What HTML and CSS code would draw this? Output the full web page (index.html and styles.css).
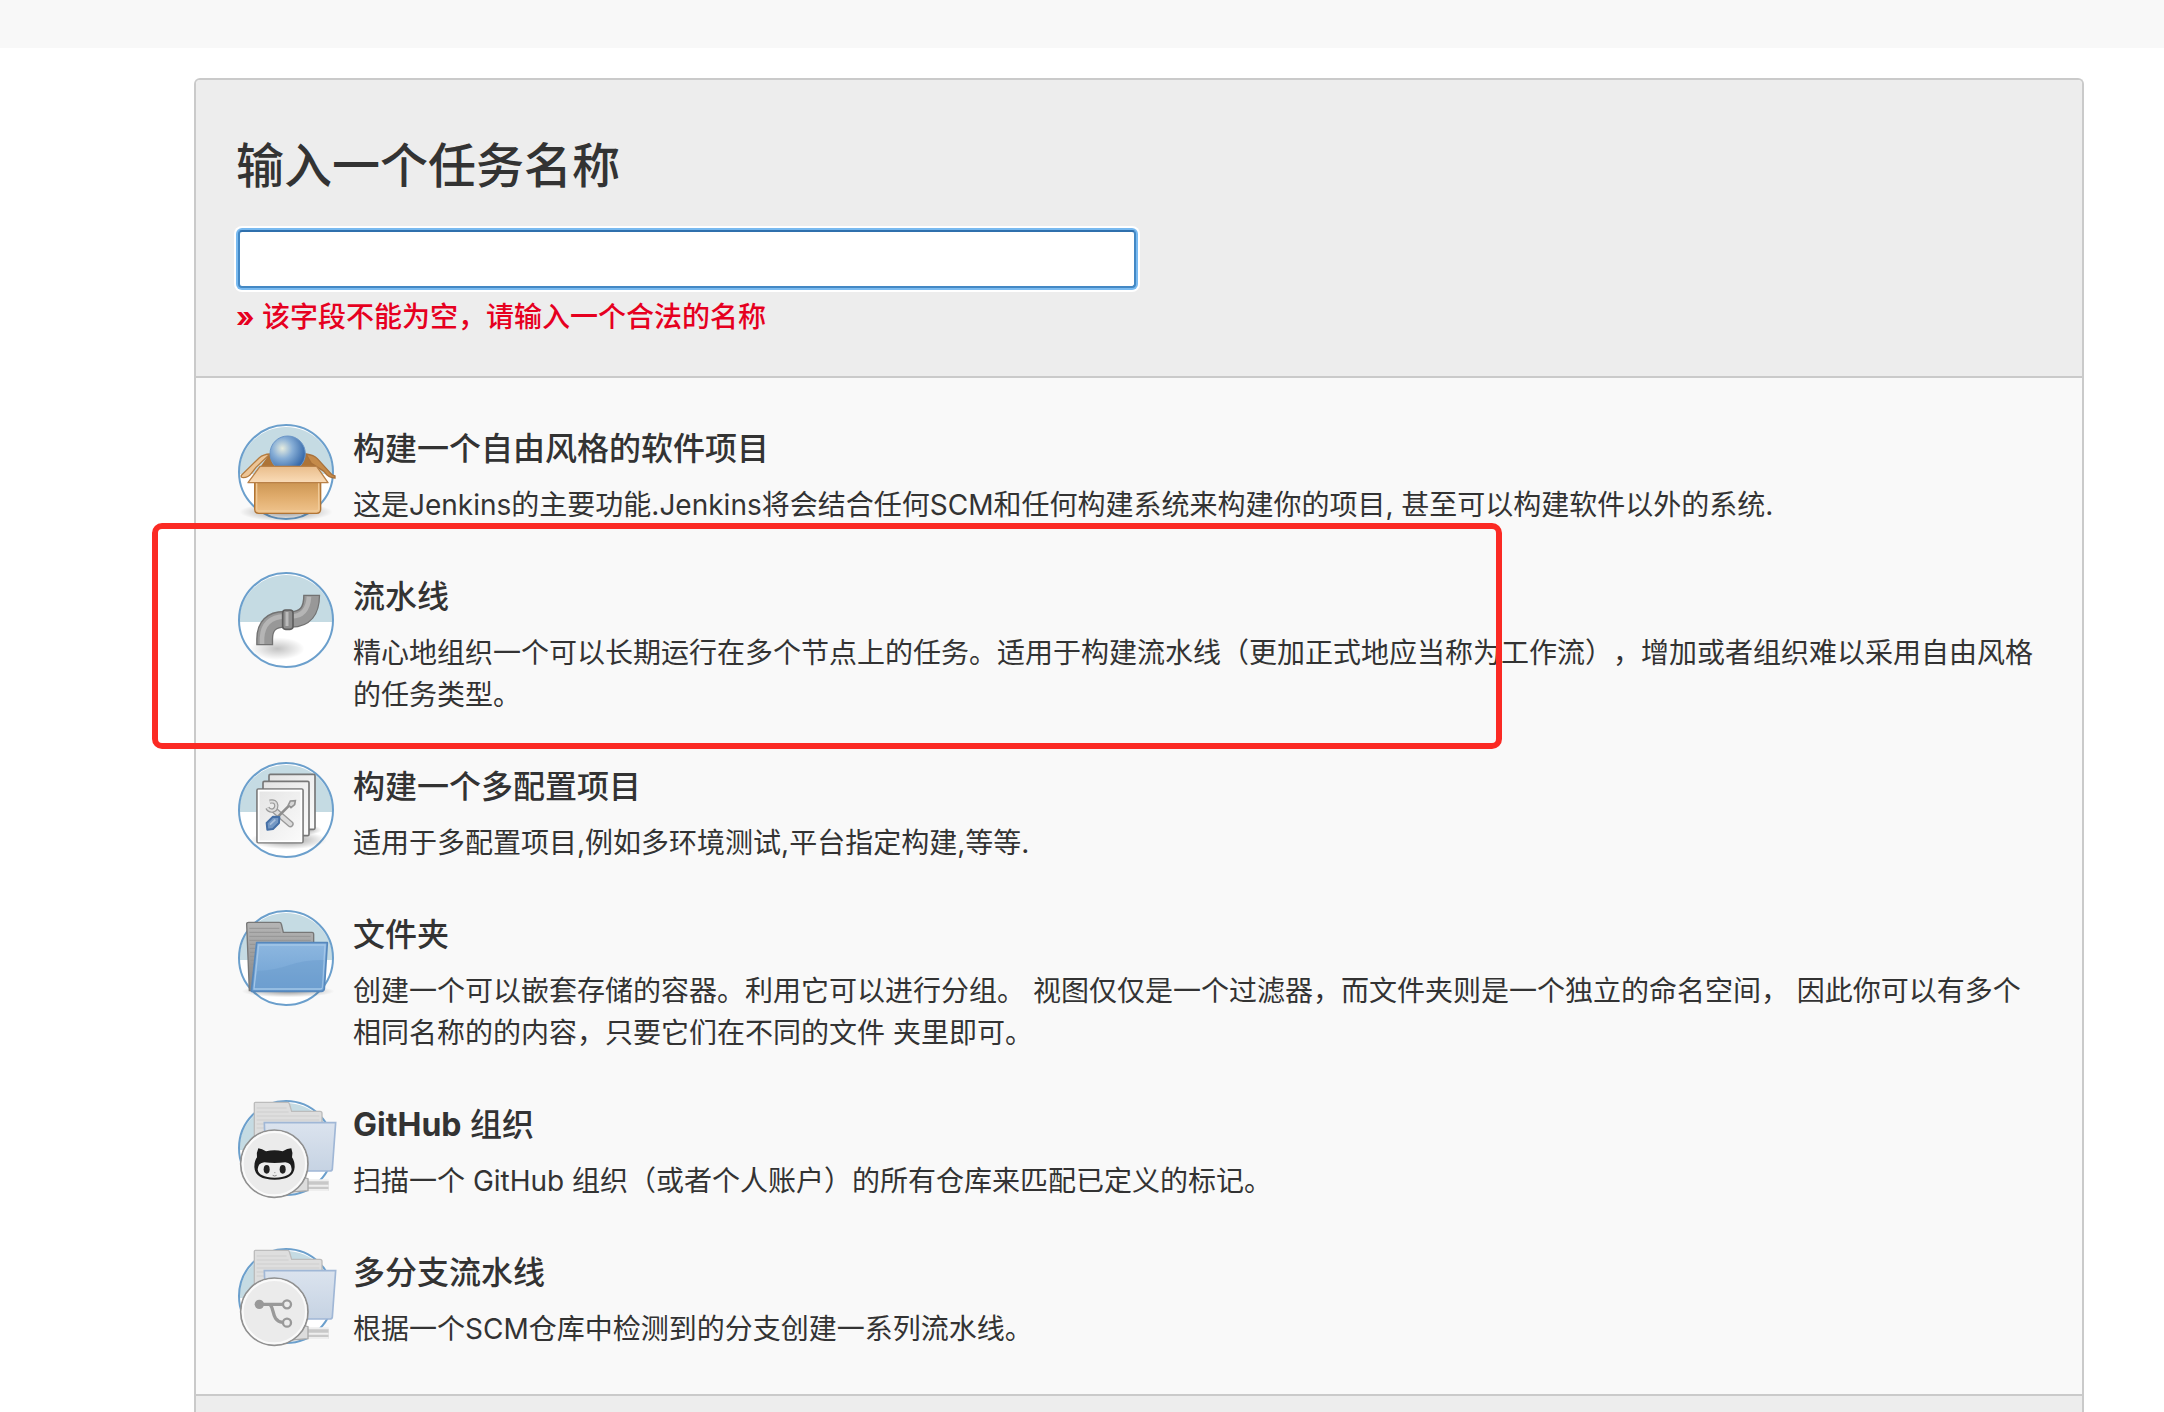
FILE: index.html
```html
<!DOCTYPE html>
<html lang="zh-Hans">
<head>
  <meta charset="UTF-8">
  <meta name="viewport" content="width=device-width, initial-scale=1.0">
  <title>新建任务 [Jenkins]</title>
  <link rel="stylesheet" href="styles.css">
</head>
<body>
  <svg class="defs" aria-hidden="true">
    <defs>
      <linearGradient id="boxFront" x1="0" y1="0" x2="0" y2="1">
        <stop offset="0" stop-color="#c9924f"/>
        <stop offset=".5" stop-color="#e0ac6c"/>
        <stop offset="1" stop-color="#f0c48e"/>
      </linearGradient>
      <linearGradient id="boxFlap" x1="0" y1="0" x2="0" y2="1">
        <stop offset="0" stop-color="#e9bd8b"/>
        <stop offset="1" stop-color="#fadcb8"/>
      </linearGradient>
      <radialGradient id="ball" cx=".35" cy=".35" r=".65">
        <stop offset="0" stop-color="#e6ecdf"/>
        <stop offset=".45" stop-color="#87aed6"/>
        <stop offset="1" stop-color="#3a6cab"/>
      </radialGradient>
      <linearGradient id="paper" x1="0" y1="0" x2="1" y2="1">
        <stop offset="0" stop-color="#e4e4e4"/>
        <stop offset="1" stop-color="#fbfbfb"/>
      </linearGradient>
      <linearGradient id="blueFolder" x1="0" y1="0" x2="0" y2="1">
        <stop offset="0" stop-color="#8db7e0"/>
        <stop offset="1" stop-color="#6d9fd1"/>
      </linearGradient>
      <linearGradient id="paleFolder" x1="0" y1="0" x2="0" y2="1">
        <stop offset="0" stop-color="#dbe3ee"/>
        <stop offset="1" stop-color="#c6d3e3"/>
      </linearGradient>
      <linearGradient id="greyFolder" x1="0" y1="0" x2="0" y2="1">
        <stop offset="0" stop-color="#b5b5b5"/>
        <stop offset="1" stop-color="#858585"/>
      </linearGradient>
      <radialGradient id="shadow">
        <stop offset="0" stop-color="#000" stop-opacity=".4"/>
        <stop offset="1" stop-color="#000" stop-opacity="0"/>
      </radialGradient>
      <g id="disc">
        <circle cx="150" cy="144" r="141" fill="#fff"/>
        <path d="M9 150A141 141 0 1 1 291 150Z" fill="#c5dbe3"/>
        <circle cx="150" cy="144" r="141" fill="none" stroke="#6b9fcc" stroke-width="6"/>
      </g>
      <g id="remote">
        <use href="#disc"/>
        <path d="M55 150V10q0-3 3-3H155q4 0 5 4L167 34H252q6 0 6 6V150Z" fill="#dedede" stroke="#bcbcbc" stroke-width="4"/>
        <path d="M62 24H152M62 36H158M62 48H250M62 60H250M62 72H250M62 84H250" stroke="#cecece" stroke-width="3"/>
        <path d="M85 68H299L289 207Q288 213 282 213H90Z" fill="url(#paleFolder)" stroke="#a0b7d6" stroke-width="5"/>
        <path d="M180 243H278V272H180Z" fill="#c8c8c8"/>
        <path d="M210 241H278M210 257H278M210 270H278" stroke="#eee" stroke-width="6"/>
        <path d="M195 230L216 236V272L170 276Z" fill="#ddd" stroke="#aaa" stroke-width="4"/>
        <circle cx="115" cy="191" r="101" fill="#ebebeb" stroke="#909090" stroke-width="5"/>
        <circle cx="115" cy="191" r="95" fill="none" stroke="#fafafa" stroke-width="6"/>
      </g>
    </defs>
  </svg>

  <div class="topbar"></div>

  <main class="panel">
    <div class="panel-header">
      <h1><label for="name">输入一个任务名称</label></h1>
      <input type="text" id="name" name="name" autocomplete="off" aria-describedby="nameError">
      <div class="error" id="nameError"><b>»</b> 该字段不能为空，请输入一个合法的名称</div>
    </div>

    <ul class="items">
      <li class="item">
        <svg class="icon" viewBox="0 0 300 288" aria-hidden="true">
          <use href="#disc"/>
          <ellipse cx="150" cy="264" rx="140" ry="28" fill="url(#shadow)"/>
          <g transform="translate(-48 -42)">
            <path d="M108 190L148 132H262L304 190Z" fill="#ad7437"/>
            <path d="M150 132Q130 133 118 143L64 196Q62 203 70 203Q85 202 94 190L108 172Z" fill="#edc596" stroke="#b47b3e" stroke-width="4"/>
            <path d="M258 132Q282 135 292 146L330 188Q335 196 345 198V204Q325 204 312 184L274 160Z" fill="#c58b4a" stroke="#a9713a" stroke-width="4"/>
            <circle cx="203" cy="131" r="53" fill="url(#ball)" stroke="#6b96c8" stroke-width="3"/>
            <path d="M104 210H302V298Q302 310 290 310H116Q104 310 104 298Z" fill="url(#boxFront)" stroke="#b17535" stroke-width="4"/>
            <path d="M110 218V296Q110 303 118 303H288Q296 303 296 296V218" fill="none" stroke="#f0ca98" stroke-width="4"/>
            <path d="M120 169H290L324 218H84Z" fill="url(#boxFlap)" stroke="#b98148" stroke-width="4" stroke-linejoin="round"/>
          </g>
        </svg>
        <div class="text">
          <h2>构建一个自由风格的软件项目</h2>
          <p>这是Jenkins的主要功能.Jenkins将会结合任何SCM和任何构建系统来构建你的项目, 甚至可以构建软件以外的系统.</p>
        </div>
      </li>
      <li class="item marked">
        <svg class="icon" viewBox="0 0 300 288" aria-hidden="true">
          <use href="#disc"/>
          <g transform="translate(-48 -36)">
            <ellipse cx="172" cy="266" rx="82" ry="34" fill="url(#shadow)" opacity=".6"/>
            <path d="M134 256V238Q134 178 194 178H214Q275 178 275 104" fill="none" stroke="#727272" stroke-width="51"/>
            <path d="M134 252V238Q134 178 194 178H214Q275 178 275 108" fill="none" stroke="#989898" stroke-width="43"/>
            <path d="M126 252V234Q130 171 194 169H214Q263 169 267 110" fill="none" stroke="#b5b5b5" stroke-width="14"/>
            <rect x="188" y="150" width="31" height="58" rx="9" fill="#8e8e8e" stroke="#5e5e5e" stroke-width="5"/>
            <path d="M201 156V198" stroke="#bbb" stroke-width="9"/>
          </g>
        </svg>
        <div class="text">
          <h2>流水线</h2>
          <p>精心地组织一个可以长期运行在多个节点上的任务。适用于构建流水线（更加正式地应当称为工作流），增加或者组织难以采用自由风格的任务类型。</p>
        </div>
      </li>
      <li class="item">
        <svg class="icon" viewBox="0 0 300 288" aria-hidden="true">
          <use href="#disc"/>
          <g transform="translate(-48 -36)">
            <ellipse cx="205" cy="270" rx="115" ry="28" fill="url(#shadow)"/>
            <ellipse cx="250" cy="240" rx="55" ry="16" fill="url(#shadow)"/>
            <g fill="url(#paper)" stroke="#777" stroke-width="5">
              <rect x="147" y="73" width="138" height="165" rx="4"/>
              <rect x="129" y="94" width="138" height="163" rx="4"/>
              <rect x="111" y="117" width="138" height="161" rx="4"/>
            </g>
            <path d="M116 274V122H244V274Z" fill="none" stroke="#fff" stroke-width="5"/>
            <path d="M165 182L211 222" stroke="#999" stroke-width="20" stroke-linecap="round"/>
            <path d="M165 182L211 222" stroke="#dcdcdc" stroke-width="12" stroke-linecap="round"/>
            <path d="M149 155Q167 151 169 166Q169 181 156 182Q146 181 142 173" fill="none" stroke="#999" stroke-width="13"/>
            <path d="M149 155Q167 151 169 166Q169 181 156 182Q146 181 142 173" fill="none" stroke="#ddd" stroke-width="6"/>
            <path d="M172 202L208 166" stroke="#8d8d8d" stroke-width="8"/>
            <path d="M205 165L211 153L226 152L224 164L213 173Z" fill="#d6d6d6" stroke="#929292" stroke-width="5"/>
            <path d="M140 219L159 200L178 201L177 219L159 237L142 239Z" fill="#7498c4" stroke="#456fa5" stroke-width="6" stroke-linejoin="round"/>
            <path d="M150 224L166 209" stroke="#a9c0dd" stroke-width="5"/>
          </g>
        </svg>
        <div class="text">
          <h2>构建一个多配置项目</h2>
          <p>适用于多配置项目,例如多环境测试,平台指定构建,等等.</p>
        </div>
      </li>
      <li class="item">
        <svg class="icon" viewBox="0 0 300 288" aria-hidden="true">
          <use href="#disc"/>
          <g transform="translate(-48 -30)">
            <ellipse cx="204" cy="274" rx="140" ry="18" fill="url(#shadow)"/>
            <path d="M88 272L80 72Q80 67 86 67H178Q183 67 184 72L190 97H276Q281 97 281 103V272Z" fill="url(#greyFolder)" stroke="#777" stroke-width="4"/>
            <path d="M88 85H178M88 97H182M88 109H272M88 121H272M89 133H106M89 145H105M90 157H105M90 169H104M91 181H103M91 193H102M92 205H101" stroke="#959595" stroke-width="3"/>
            <path d="M110 128H322L313 266Q312 274 304 274H94Z" fill="url(#blueFolder)" stroke="#5688bd" stroke-width="5" stroke-linejoin="round"/>
            <path d="M116 135H315L307 262Q306 267 301 267H102Z" fill="none" stroke="#a3c6e8" stroke-width="4"/>
            <path d="M112 213Q170 210 206 196Q250 180 311 180L307 264H104Z" fill="#6a9ccd" opacity=".45"/>
          </g>
        </svg>
        <div class="text">
          <h2>文件夹</h2>
          <p>创建一个可以嵌套存储的容器。利用它可以进行分组。 视图仅仅是一个过滤器，而文件夹则是一个独立的命名空间， 因此你可以有多个相同名称的的内容，只要它们在不同的文件 夹里即可。</p>
        </div>
      </li>
      <li class="item">
        <svg class="icon" viewBox="0 0 300 288" aria-hidden="true">
          <use href="#remote"/>
          <g transform="translate(-48 -45)">
            <path d="M115 190Q126 191 138 199Q164 193 188 199Q202 190 214 190Q219 202 216 217Q224 228 224 246Q222 284 164 284Q105 284 103 246Q103 228 111 217Q109 202 115 190Z" fill="#1c1c1c"/>
            <path d="M133 232Q149 234 164 234Q180 234 196 232Q215 234 215 253Q213 277 164 278Q115 277 113 253Q114 234 133 232Z" fill="#ececec"/>
            <ellipse cx="140" cy="253" rx="9" ry="13" fill="#222"/>
            <ellipse cx="188" cy="253" rx="9" ry="13" fill="#222"/>
            <path d="M163 263H166M158 271Q164 275 170 271" fill="none" stroke="#888" stroke-width="3"/>
          </g>
        </svg>
        <div class="text">
          <h2><b>GitHub</b> 组织</h2>
          <p>扫描一个 GitHub 组织（或者个人账户）的所有仓库来匹配已定义的标记。</p>
        </div>
      </li>
      <li class="item">
        <svg class="icon" viewBox="0 0 300 288" aria-hidden="true">
          <use href="#remote"/>
          <g transform="translate(-48 -39)" fill="none" stroke="#999">
            <path d="M118 208H188M150 208C164 222 154 258 188 262" stroke-width="10"/>
            <circle cx="118" cy="208" r="14" fill="#999" stroke="none"/>
            <circle cx="201" cy="208" r="12" fill="#ececec" stroke-width="7"/>
            <circle cx="201" cy="263" r="12" fill="#ececec" stroke-width="7"/>
          </g>
        </svg>
        <div class="text">
          <h2>多分支流水线</h2>
          <p>根据一个SCM仓库中检测到的分支创建一系列流水线。</p>
        </div>
      </li>
    </ul>

    <div class="panel-footer"></div>
  </main>
</body>
</html>
```

FILE: styles.css
```css
*, *::after {
  box-sizing: border-box;
}
body {
  display: flex;
  flex-direction: column;
  min-height: 100vh;
  margin: 0;
  background-color: #ffffff;
  color: #333333;
  font-family: Inter, "Noto Sans CJK SC", sans-serif;
  font-size: 28px;
  line-height: 42px;
  text-spacing-trim: space-all;
}
.defs {
  position: absolute;
  width: 0;
  height: 0;
}
.topbar {
  height: 48px;
  background-color: #f8f8f8;
}
.panel {
  flex: 1;
  display: flex;
  flex-direction: column;
  margin: 30px 80px 0 194px;
  border: 2px solid #cacaca;
  border-bottom: 0;
  border-radius: 6px 6px 0 0;
  background-color: #f9f9f9;
}
.panel-header {
  padding: 50px 40px 38px;
  border-bottom: 2px solid #cacaca;
  border-radius: 4px 4px 0 0;
  background-color: #ededed;
}
h1 {
  margin: 0 0 28px;
  font-size: 48px;
  font-weight: 500;
  line-height: 72px;
}
#name {
  display: block;
  width: 898px;
  max-width: 100%;
  height: 58px;
  margin: 0 2px 8px;
  padding: 0 12px;
  border: 2px solid #4388c4;
  border-top-color: #2f70ad;
  border-radius: 4px;
  outline: none;
  box-shadow: 0 0 0 2px #79baf0, 0 0 0 4px #ffffff;
  font: inherit;
}
.error {
  color: #e6001f;
  font-weight: 500;
}
b {
  font-weight: 700;
}
.items {
  display: flex;
  flex-direction: column;
  gap: 46px;
  margin: 0;
  padding: 46px 40px 44px;
  list-style: none;
}
.item {
  position: relative;
  display: flex;
  gap: 17px;
}
.icon {
  flex: none;
  width: 100px;
  height: 96px;
  overflow: visible;
}
.text {
  flex: 1;
  padding-top: 4px;
}
h2 {
  margin: 0 0 14px;
  font-size: 32px;
  font-weight: 500;
  line-height: 42px;
}
p {
  margin: 0;
}
/* red frame around the pipeline entry */
.marked::after {
  content: "";
  position: absolute;
  top: -49px;
  left: -84px;
  width: 1350px;
  height: 226px;
  border: 6px solid #fb2a24;
  border-radius: 10px;
}
.panel-footer {
  flex: 1;
  border-top: 2px solid #cacaca;
  background-color: #ededed;
}
```
